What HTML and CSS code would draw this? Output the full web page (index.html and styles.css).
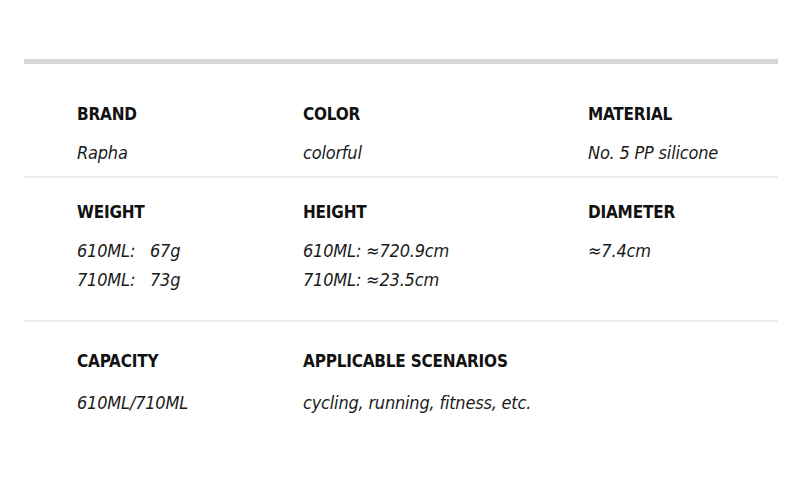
FILE: index.html
```html
<!DOCTYPE html>
<html>
<head>
<meta charset="utf-8">
<link rel="stylesheet" href="styles.css">
</head>
<body>
<div class="specs">
  <div class="row row-1">
    <div class="cell"><div class="label">BRAND</div><div class="value">Rapha</div></div>
    <div class="cell"><div class="label">COLOR</div><div class="value">colorful</div></div>
    <div class="cell"><div class="label">MATERIAL</div><div class="value">No. 5 PP silicone</div></div>
  </div>
  <div class="row row-2">
    <div class="cell"><div class="label">WEIGHT</div><div class="value">610ML:&nbsp;&nbsp;&nbsp;67g<br>710ML:&nbsp;&nbsp;&nbsp;73g</div></div>
    <div class="cell"><div class="label">HEIGHT</div><div class="value">610ML: ≈720.9cm<br>710ML: ≈23.5cm</div></div>
    <div class="cell"><div class="label">DIAMETER</div><div class="value">≈7.4cm</div></div>
  </div>
  <div class="row row-3">
    <div class="cell"><div class="label">CAPACITY</div><div class="value">610ML/710ML</div></div>
    <div class="cell cell-wide"><div class="label">APPLICABLE SCENARIOS</div><div class="value">cycling, running, fitness, etc.</div></div>
  </div>
</div>
</body>
</html>
```
FILE: styles.css
```css
html, body {
  margin: 0;
  padding: 0;
  background: #ffffff;
}
body {
  font-family: "DejaVu Sans Condensed", "DejaVu Sans", sans-serif;
  font-stretch: condensed;
  color: #111111;
}
.specs {
  margin: 59px 22px 0 24px;
  border-top: 5px solid #d6d6d6;
}
.row {
  display: grid;
  grid-template-columns: 226px 285px 1fr;
  padding-left: 53px;
  border-bottom: 2px solid #ececec;
}
.row-1 { padding-top: 40px; padding-bottom: 9px; }
.row-2 { padding-top: 24px; padding-bottom: 26px; }
.row-3 { padding-top: 29px; padding-bottom: 20px; border-bottom: none; }
.row-3 .label { margin-bottom: 17px; }
.cell-wide { grid-column: span 2; }
.label {
  font-size: 17px;
  line-height: 20px;
  font-weight: bold;
  letter-spacing: -0.2px;
  color: #111111;
  margin-bottom: 14px;
}
.value {
  font-size: 18px;
  line-height: 29px;
  font-style: italic;
  letter-spacing: -0.2px;
  color: #1a1a1a;
}
```
